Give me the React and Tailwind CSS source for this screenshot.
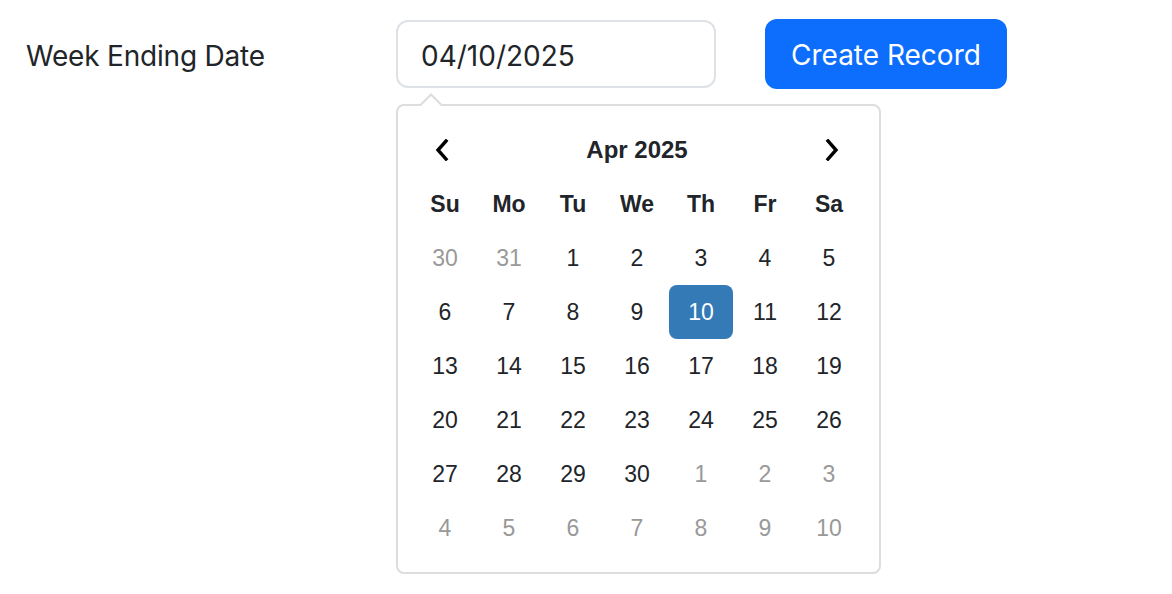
import React from 'react';

const DAY_NAMES = ['Su', 'Mo', 'Tu', 'We', 'Th', 'Fr', 'Sa'];

// six weeks shown by the picker, muted = outside April
const WEEKS = [
  [[30, true], [31, true], [1], [2], [3], [4], [5]],
  [[6], [7], [8], [9], [10], [11], [12]],
  [[13], [14], [15], [16], [17], [18], [19]],
  [[20], [21], [22], [23], [24], [25], [26]],
  [[27], [28], [29], [30], [1, true], [2, true], [3, true]],
  [[4, true], [5, true], [6, true], [7, true], [8, true], [9, true], [10, true]],
];

function Chevron({ dir }) {
  return (
    <svg width="16" height="22" viewBox="0 0 16 22" fill="none">
      <path
        d={dir === 'left' ? 'M12 2 L4 11 L12 20' : 'M4 2 L12 11 L4 20'}
        stroke="#000"
        strokeWidth="3.4"
        strokeLinecap="square"
      />
    </svg>
  );
}

function DatePicker() {
  return (
    <div className="absolute top-full left-0 mt-[16px] w-[485px] bg-white border-2 border-[#ddd] rounded-[8px] pt-[17px] pb-[17px] pl-[15px] pr-[17px] font-['Liberation_Sans',Arial,sans-serif] text-[23px] text-[#212529]">
      {/* caret */}
      <div className="absolute -top-[13px] left-[20px] w-0 h-0 border-l-[13px] border-r-[13px] border-b-[13px] border-l-transparent border-r-transparent border-b-[#ddd]" />
      <div className="absolute -top-[10px] left-[22px] w-0 h-0 border-l-[11px] border-r-[11px] border-b-[11px] border-l-transparent border-r-transparent border-b-white" />

      <div className="grid grid-cols-7 w-[448px]">
        <div className="h-[54px] flex items-center justify-center pr-[6px]">
          <Chevron dir="left" />
        </div>
        <div className="col-span-5 h-[54px] flex items-center justify-center font-bold text-[24px]">Apr 2025</div>
        <div className="h-[54px] flex items-center justify-center pl-[6px]">
          <Chevron dir="right" />
        </div>

        {DAY_NAMES.map((d) => (
          <div key={d} className="h-[54px] flex items-center justify-center font-bold">
            {d}
          </div>
        ))}

        {WEEKS.map((week, wi) =>
          week.map(([n, muted], di) => {
            const selected = wi === 1 && n === 10;
            return (
              <div
                key={wi + '-' + di}
                className={
                  'h-[54px] flex items-center justify-center rounded-[8px] ' +
                  (selected ? 'bg-[#337ab7] text-white' : muted ? 'text-[#999]' : '')
                }
              >
                {n}
              </div>
            );
          })
        )}
      </div>
    </div>
  );
}

export default function App() {
  return (
    <div className="min-h-screen bg-white font-['Inter','Noto_Sans',sans-serif] text-[#212529]">
      <div className="flex items-start pt-[20px] pl-[26px]">
        <div className="w-[370px] h-[68px] pt-[3px] flex items-center text-[28px] tracking-[-0.2px]">Week Ending Date</div>

        <div className="relative w-[320px]">
          <input
            readOnly
            value="04/10/2025"
            className="w-[320px] h-[68px] border-2 border-[#dee2e6] rounded-[12px] px-[23px] pt-[3px] text-[28px] text-[#212529] outline-none"
          />
          <DatePicker />
        </div>

        <button className="ml-[49px] -mt-[1px] h-[70px] pt-[2px] px-[26px] bg-[#0d6efd] text-white text-[28px] rounded-[12px]">
          Create Record
        </button>
      </div>
    </div>
  );
}
